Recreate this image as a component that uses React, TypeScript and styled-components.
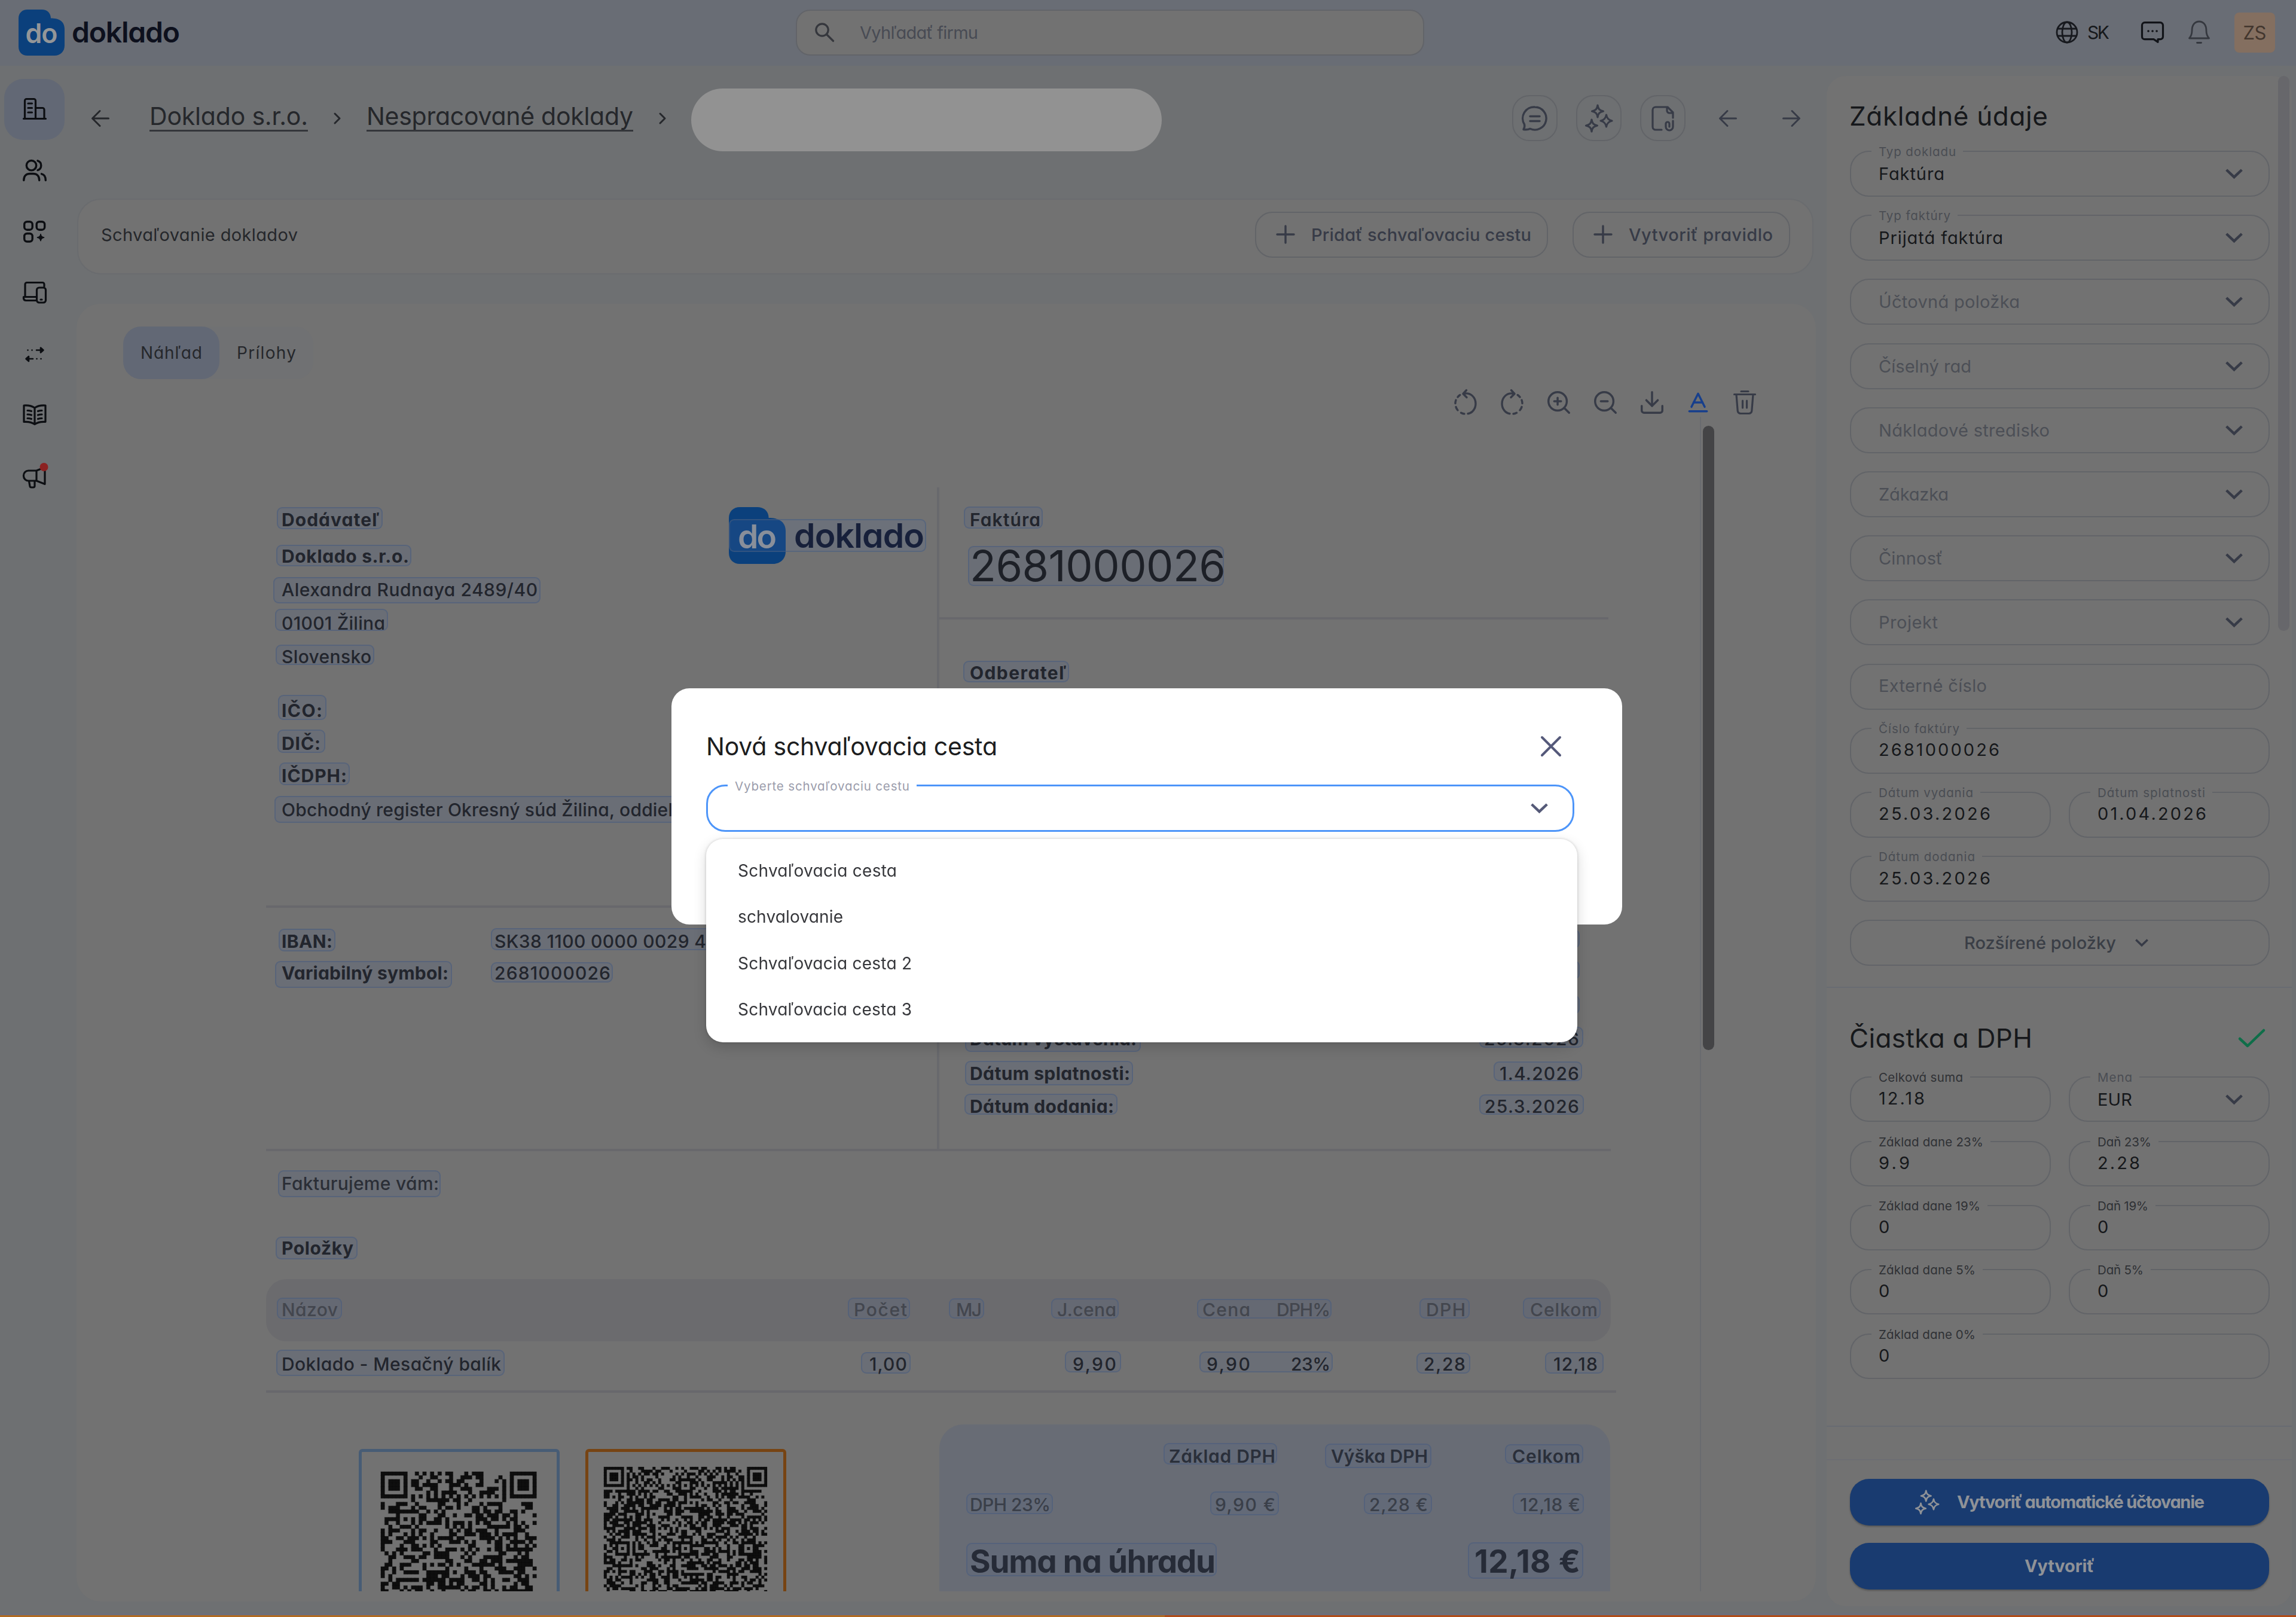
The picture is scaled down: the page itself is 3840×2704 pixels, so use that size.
import React, { useLayoutEffect, useMemo, useRef, useState } from "react";
import styled, { createGlobalStyle } from "styled-components";
import { Baseline, Download, ZoomIn, ZoomOut } from "lucide-react";

const c = {
  page: "#6e7072",
  card: "#727272",
  top: "#696d75",
  active: "#626875",
  line: "#626468",
  soft: "#6a6c6f",
  ink: "#16181b",
  text: "#25272b",
  slate: "#373b47",
  muted: "#4c4f56",
  blue: "#193b70",
};

const Global = createGlobalStyle`
  *, *::before, *::after { box-sizing: border-box; }
  html, body { margin: 0; padding: 0; background: ${c.page}; }
  body {
    font-family: Inter, "Noto Sans", sans-serif;
    font-feature-settings: "cv11";
    color: ${c.text};
    width: 3840px;
    height: 2704px;
    overflow: hidden;
  }
  button { font: inherit; color: inherit; background: none; border: 0; padding: 0; }
`;

/* ---------- text that is tracked out to a given measure ---------- */

const FitSpan = styled.span`
  display: inline-block;
  white-space: pre;
`;

function Fit({ w, children }: { w: number; children: string }) {
  const ref = useRef<HTMLSpanElement>(null);
  const [ls, setLs] = useState(0);
  useLayoutEffect(() => {
    const el = ref.current;
    if (!el) return;
    el.style.letterSpacing = "0px";
    el.style.marginRight = "0px";
    const natural = el.getBoundingClientRect().width;
    const next = (w - natural) / Math.max(1, children.length - 1);
    el.style.letterSpacing = `${next}px`;
    el.style.marginRight = `${-next}px`;
    setLs(next);
  }, [w, children]);
  return (
    <FitSpan ref={ref} style={{ letterSpacing: ls, marginRight: -ls }}>
      {children}
    </FitSpan>
  );
}

/* ---------- icons ---------- */

const Svg = styled.svg<{ $color?: string; $sw?: number }>`
  display: block;
  flex: none;
  overflow: visible;
  fill: none;
  stroke: ${(p) => p.$color ?? "currentColor"};
  stroke-width: ${(p) => p.$sw ?? 3.6};
  stroke-linecap: round;
  stroke-linejoin: round;
`;

type IconProps = { color?: string; sw?: number; size?: number };

const BuildingIcon = () => (
  <Svg width="40" height="36" viewBox="0 0 40 36" $sw={3.2}>
    <path d="M1.5 34.5h37M3.5 34V4.5a3 3 0 0 1 3-3h12a3 3 0 0 1 3 3V34M21.5 16.5H33a3 3 0 0 1 3 3V34M9 9h6.5M9 16.5h6.5M9 24h6.5" />
  </Svg>
);
const UsersIcon = () => (
  <Svg width="40" height="36" viewBox="0 0 40 36" $sw={3.4}>
    <circle cx="14.5" cy="9.7" r="8.2" />
    <path d="M25 1.8a8.3 8.3 0 0 1 0 15.8M1.8 34.5C1.8 27 6 23.5 12 23.5h5.5c6 0 10.200 3.500 10.200 11M31.500 23.800c4 .8 6.800 4 6.800 10.700" />
  </Svg>
);
const GridIcon = () => (
  <Svg width="38" height="36" viewBox="0 0 38 36" $sw={3.4}>
    <rect x="1.700" y="1.700" width="13.500" height="13.500" rx="4.500" />
    <rect x="22.200" y="1.700" width="13.500" height="13.500" rx="4.500" />
    <rect x="1.700" y="21.500" width="13.500" height="13.500" rx="4.500" />
    <path d="M29 22.500c.5 3.500 2 5 5.500 5.600-3.500.6-5 2.100-5.500 5.600-.5-3.500-2-5-5.500-5.600 3.500-.6 5-2.100 5.500-5.600z" fill="currentColor" strokeWidth="1.600" />
  </Svg>
);
const DevicesIcon = () => (
  <Svg width="40" height="36" viewBox="0 0 40 36" $sw={3.2}>
    <path d="M4 25V4.500a3 3 0 0 1 3-3h26a3 3 0 0 1 3 3V8M22 31.500H5.500a4 4 0 0 1-4-3.500v-2.500H22" />
    <rect x="23.500" y="10" width="15" height="25" rx="4" />
    <path d="M30 30h2" />
  </Svg>
);
const TransferIcon = () => (
  <Svg width="34" height="30" viewBox="0 0 34 30" $sw={2.6}>
    <path d="M20 8.500h8M27 4.500l4.500 4-4.500 4zM14 23H6M7 19L2.500 23l4.500 4z" fill="currentColor" />
    <path d="M5.500 8.500h.1M12.500 8.500h.1M20.500 23h.1M27.500 23h.1" />
  </Svg>
);
const BookIcon = () => (
  <Svg width="40" height="36" viewBox="0 0 40 36" $sw={3.2}>
    <path d="M20 6C15 2.500 9 1.500 2 2v27.500c7-.5 13 .5 18 4 5-3.500 11-4.500 18-4V2C31 1.500 25 2.500 20 6zM20 6v27.500" />
    <path d="M8 10.500c2.500 0 4.500.3 6.500 1M8 17c2.500 0 4.500.3 6.500 1M8 23.500c2.500 0 4.500.3 6.500 1M32 10.500c-2.500 0-4.500.3-6.500 1M32 17c-2.500 0-4.500.3-6.500 1M32 23.500c-2.500 0-4.500.3-6.500 1" />
  </Svg>
);
const HornIcon = () => (
  <Svg width="40" height="38" viewBox="0 0 40 38" $sw={3.2}>
    <path d="M23 9v17M23 9H9.500a8 8 0 0 0-8 8v1a8 8 0 0 0 8 8H23l14 5.500V3.500zM10.500 26.500l1.500 8.500a2.500 2.500 0 0 0 2.500 2h3a2.500 2.500 0 0 0 2.500-2.500V26.500" />
    <circle cx="35.500" cy="3" r="7" fill="#8c2222" stroke="none" />
  </Svg>
);
const SearchIcon = () => (
  <Svg width="32" height="32" viewBox="0 0 32 32" $color="#35373d" $sw={3.2}>
    <circle cx="12" cy="12" r="10.200" />
    <path d="M19.500 19.500L30.500 30.500" />
  </Svg>
);
const GlobeIcon = () => (
  <Svg width="38" height="38" viewBox="0 0 38 38" $color="#17191e" $sw={2.800}>
    <circle cx="19" cy="19" r="17" />
    <ellipse cx="19" cy="19" rx="8" ry="17" />
    <path d="M3.500 13h31M3.500 25h31" />
  </Svg>
);
const ChatIcon = () => (
  <Svg width="38" height="36" viewBox="0 0 38 36" $color="#111318" $sw={3.200}>
    <path d="M6 1.700h26a4.500 4.500 0 0 1 4.500 4.500v19a4.500 4.500 0 0 1-4.500 4.500h-4v4.600l-7-4.600H6a4.500 4.500 0 0 1-4.500-4.500v-19A4.500 4.500 0 0 1 6 1.700z" />
    <path d="M12 16h.1M19 16h.1M26 16h.1" strokeWidth="3.600" />
  </Svg>
);
const BellIcon = () => (
  <Svg width="38" height="40" viewBox="0 0 38 40" $color="#35383f" $sw={2.800}>
    <path d="M2.500 30h33c-3-3.500-4.500-7-4.500-12.500C31 8 26.500 2 19 2S7 8 7 17.500C7 23 5.500 26.500 2.500 30zM15.500 37.500h7" />
  </Svg>
);
const ArrowIcon = ({ right, color, size = 30 }: IconProps & { right?: boolean }) => (
  <Svg width={size} height="28" viewBox="0 0 30 28" $color={color} $sw={3}>
    {right ? <path d="M1.500 14h27M16 1.500L28.500 14 16 26.500" /> : <path d="M28.500 14h-27M14 1.500L1.500 14 14 26.500" />}
  </Svg>
);
const CrumbChevron = () => (
  <Svg width="14" height="18" viewBox="0 0 14 18" $sw={3}>
    <path d="M3 1l8 8-8 8" />
  </Svg>
);
const Chevron = styled(Svg)`
  stroke-linecap: butt;
  stroke-linejoin: miter;
`;
const DownIcon = ({ size = 29, color = c.slate, sw = 4.4 }: IconProps) => (
  <Chevron width={size} height={(size * 17) / 29} viewBox="0 0 29 17" $color={color} $sw={sw}>
    <path d="M1.700 2l12.800 12.200L27.300 2" />
  </Chevron>
);
const PlusIcon = () => (
  <Svg width="30" height="30" viewBox="0 0 30 30" $sw={3.400}>
    <path d="M15 1v28M1 15h28" />
  </Svg>
);
const CommentIcon = () => (
  <Svg width="42" height="42" viewBox="0 0 42 42" $color={c.slate} $sw={3.400}>
    <path d="M21 2a19 19 0 1 1-8 36.200c-3 1.800-7 1.800-11 1.300 2-3 2.200-5.500 1.500-8.500A19 19 0 0 1 21 2z" />
    <path d="M13 17.500h16M13 25.500h16" />
  </Svg>
);
const SparkIcon = ({ size = 48, color = c.slate, sw = 3.200 }: IconProps) => (
  <Svg width={size} height={size} viewBox="0 0 48 48" $color={color} $sw={sw}>
    <path d="M22 2c1 6.500 3 8.500 9.500 10-6.500 1.500-8.500 3.500-9.500 10-1-6.500-3-8.500-9.500-10C19 10.500 21 8.500 22 2z" />
    <path d="M36.500 18c1 6 3.500 8.500 9.500 10-6 1.500-8.500 4-9.500 10-1-6-3.500-8.500-9.500-10 6-1.500 8.500-4 9.500-10z" />
    <path d="M12 26c1 6.500 3 8.500 9.500 10-6.500 1.500-8.500 3.500-9.500 10-1-6.500-3-8.500-9.500-10C9 34.500 11 32.500 12 26z" />
  </Svg>
);
const FileClipIcon = () => (
  <Svg width="38" height="42" viewBox="0 0 38 42" $color={c.slate} $sw={3.200}>
    <path d="M17 40H7a5 5 0 0 1-5-5V7a5 5 0 0 1 5-5h20l9 9v9M26 2v6a4 4 0 0 0 4 4h6" />
    <path d="M36 25v10a6 6 0 0 1-12 0v-5M24 30a3 3 0 0 1 6 0v5" />
  </Svg>
);
const RotateIcon = ({ cw }: { cw?: boolean }) => (
  <Svg width="40" height="44" viewBox="0 0 40 44" $color={c.slate} $sw={3.400}>
    <g transform={cw ? "matrix(-1 0 0 1 40 0)" : undefined}>
      <path d="M17 7.500C29 4.500 37 14 37 24c0 8.500-5.500 15.500-13 16.800M21.500 1.500L16 7.500l6 6" />
      <path d="M18 41c-2 0-4-.8-5.500-1.700M7 35c-1.500-1.800-2.500-3.500-3-5.500M3 23.500c0-2 .4-3.800 1-5.500M7 13c1-1.400 2.400-2.600 3.800-3.500" />
    </g>
  </Svg>
);
const TrashIcon = () => (
  <Svg width="38" height="40" viewBox="0 0 38 40" $color={c.slate} $sw={3.200}>
    <path d="M1.500 6.500h35M13 1.500h12M5 7l2.200 27a5 5 0 0 0 5 4.500h13.600a5 5 0 0 0 5-4.500L33 7M15.500 17v12M22.500 17v12" />
  </Svg>
);
const CheckIcon = () => (
  <Svg width="44" height="32" viewBox="0 0 44 32" $color="#0f6e49" $sw={4.500}>
    <path d="M2 17l13 12L42 3" />
  </Svg>
);
const CloseIcon = () => (
  <Svg width="34" height="34" viewBox="0 0 34 34" $color="#55597a" $sw={4}>
    <path d="M2 2l30 30M32 2L2 32" />
  </Svg>
);

/* ---------- brand ---------- */

const LogoRow = styled.div<{ $gap: number }>`
  display: flex;
  align-items: center;
  gap: ${(p) => p.$gap}px;
`;
const Mark = styled.div<{ $s: number }>`
  position: relative;
  flex: none;
  width: ${(p) => p.$s}px;
  height: ${(p) => p.$s}px;
  display: flex;
  align-items: center;
  justify-content: center;
  padding-top: ${(p) => p.$s * 0.05}px;
  color: #949698;
  font-weight: 600;
  font-size: ${(p) => p.$s * 0.58}px;
  line-height: 1;
  & > svg { position: absolute; inset: 0; }
  & > span { position: relative; }
`;
const Word = styled.div<{ $size: number; $color: string }>`
  font-size: ${(p) => p.$size}px;
  font-weight: 600;
  line-height: 1;
  color: ${(p) => p.$color};
`;

function Logo({ s, markW, wordW, gap, word, color }: { s: number; markW: number; wordW: number; gap: number; word: number; color: string }) {
  return (
    <LogoRow $gap={gap}>
      <Mark $s={s}>
        <svg viewBox="0 0 77 77" width={s} height={s}>
          <path d="M15 0h24c9 0 15 6 15 14.500 12 0 23 4 23 18V60c0 10-7 17-17 17H15C6 77 0 71 0 62V15C0 6 6 0 15 0z" fill="#0b407c" />
        </svg>
        <Fit w={markW}>do</Fit>
      </Mark>
      <Word $size={word} $color={color}>
        <Fit w={wordW}>doklado</Fit>
      </Word>
    </LogoRow>
  );
}

/* ---------- shell ---------- */

const Shell = styled.div`
  width: 3840px;
  height: 2704px;
  display: flex;
  flex-direction: column;
  background: ${c.page};
`;
const TopBar = styled.header`
  height: 110px;
  flex: none;
  display: flex;
  align-items: center;
  background: ${c.top};
  padding: 0 35px 2px 31px;
`;
const Search = styled.div`
  width: 1051px;
  height: 77px;
  margin-left: 1030px;
  display: flex;
  align-items: center;
  gap: 43px;
  padding-left: 30px;
  border: 2px solid #626469;
  border-radius: 24px;
  background: ${c.card};
  color: #484b54;
  font-size: 29px;
`;
const TopActions = styled.div`
  margin-left: auto;
  display: flex;
  align-items: center;
`;
const Lang = styled.div`
  margin: 0 53px 0 15px;
  font-size: 30px;
  color: ${c.ink};
`;
const Avatar = styled.div`
  width: 68px;
  height: 67px;
  margin-left: 40px;
  border-radius: 8px;
  background: #846f60;
  color: #42362e;
  font-size: 31px;
  display: flex;
  align-items: center;
  justify-content: center;
`;
const BellWrap = styled.div`
  margin-left: 40px;
`;
const Main = styled.div`
  flex: 1;
  min-height: 0;
  display: flex;
`;
const Sidebar = styled.nav`
  width: 128px;
  flex: none;
  padding: 22px 0 0 7px;
  color: #0c0e12;
`;
const NavItem = styled.div<{ $on?: boolean }>`
  width: 101px;
  height: 102.400px;
  display: flex;
  align-items: center;
  justify-content: center;
  padding-bottom: 2px;
  border-radius: 32px;
  background: ${(p) => (p.$on ? c.active : "transparent")};
`;
const Content = styled.main`
  width: 2927px;
  flex: none;
  display: flex;
  flex-direction: column;
`;
const BottomStrip = styled.div`
  height: 6px;
  flex: none;
  border-top: 3px solid #6b6e7c;
  background: linear-gradient(90deg, #b06a20 0 1948px, #b04c16 1948px);
`;

/* ---------- breadcrumb ---------- */

const CrumbRow = styled.div`
  height: 105px;
  margin-top: 35px;
  padding: 0 44px 0 25px;
  display: flex;
  align-items: center;
  flex: none;
  color: ${c.text};
`;
const Crumb = styled.a<{ $ml: number; $mr: number }>`
  margin: -2px ${(p) => p.$mr}px 0 ${(p) => p.$ml}px;
  font-size: 41px;
  line-height: 40px;
  border-bottom: 3px solid #34363a;
  height: 46px;
`;
const Redacted = styled.div`
  width: 787px;
  height: 105px;
  margin: 6px 0 0 41px;
  border-radius: 53px;
  background: #929292;
`;
const Tools = styled.div`
  margin-left: auto;
  display: flex;
  align-items: center;
  gap: 31px;
  color: ${c.slate};
`;
const RoundButton = styled.button`
  width: 76px;
  height: 77px;
  border: 2px solid ${c.line};
  border-radius: 29px;
  display: flex;
  align-items: center;
  justify-content: center;
`;
const Pager = styled.div`
  display: flex;
  gap: 76px;
  margin-left: 25px;
`;

/* ---------- approval card ---------- */

const ApprovalCard = styled.section`
  height: 127px;
  width: 2904px;
  flex: none;
  margin: 82px 0 0 1px;
  padding: 0 37px 7px 38px;
  display: flex;
  align-items: center;
  background: ${c.card};
  border: 2px solid ${c.soft};
  border-radius: 40px;
  font-size: 29px;
`;
const OutlineButton = styled.button<{ $w: number }>`
  width: ${(p) => p.$w}px;
  height: 77px;
  display: flex;
  align-items: center;
  gap: 28px;
  padding-left: 34px;
  border: 2px solid ${c.line};
  border-radius: 29px;
  color: ${c.slate};
  font-weight: 500;
  font-size: 29px;
`;
const Actions = styled.div`
  margin-left: auto;
  display: flex;
  gap: 41px;
`;

/* ---------- preview ---------- */

const Preview = styled.section`
  width: 2909px;
  height: 2170px;
  margin-top: 49px;
  flex: none;
  background: ${c.card};
  border-radius: 40px;
  overflow: hidden;
  display: flex;
  flex-direction: column;
`;
const Tabs = styled.div`
  display: flex;
  width: 318px;
  height: 88px;
  flex: none;
  margin: 38px 0 0 78px;
  background: #707173;
  border-radius: 30px;
  font-size: 28px;
`;
const Tab = styled.div<{ $on?: boolean; $w: number }>`
  width: ${(p) => p.$w}px;
  display: flex;
  align-items: center;
  justify-content: center;
  border-radius: 30px;
  background: ${(p) => (p.$on ? c.active : "transparent")};
`;
const DocTools = styled.div`
  height: 48px;
  flex: none;
  margin: 15px 80px 0 0;
  display: flex;
  justify-content: flex-end;
  align-items: center;
  color: ${c.slate};
`;
const DocTool = styled.div<{ $color?: string }>`
  width: 77.800px;
  display: flex;
  justify-content: center;
  color: ${(p) => p.$color ?? "inherit"};
  svg { flex: none; }
`;
const Viewer = styled.div`
  height: 1964px;
  flex: none;
  display: flex;
  overflow: hidden;
`;
const Sheet = styled.div`
  width: 2717px;
  flex: none;
  border-right: 2px solid #696b6f;
  padding: 118px 0 0 317px;
`;
const DocThumb = styled.div`
  width: 19px;
  height: 1044px;
  margin: 15px 0 0 3px;
  border-radius: 10px;
  background: #444446;
`;

/* ---------- invoice ---------- */

const Rule = styled.div<{ $w: number; $mt?: number }>`
  width: ${(p) => p.$w}px;
  height: 4px;
  flex: none;
  margin-top: ${(p) => p.$mt ?? 0}px;
  background: #68686c;
`;
const Parties = styled.div`
  width: 2249px;
  height: 1106px;
  display: flex;
`;
const Supplier = styled.div`
  width: 1122px;
  height: 1106px;
  display: flex;
  flex-direction: column;
`;
const SupplierTop = styled.div`
  height: 699px;
  padding: 33px 0 0 26px;
  display: flex;
  justify-content: space-between;
  overflow: hidden;
`;
const Stack = styled.div<{ $w?: number }>`
  display: flex;
  flex-direction: column;
  align-items: flex-start;
  width: ${(p) => (p.$w ? `${p.$w}px` : "auto")};
`;
const Invoice = styled.div`
  width: 1123px;
  border-left: 4px solid #68696d;
  display: flex;
  flex-direction: column;
`;
const Pad = styled.div<{ $t: number; $l?: number }>`
  padding: ${(p) => p.$t}px 51px 0 ${(p) => p.$l ?? 51}px;
`;
const Pair = styled.div<{ $mt: number; $start?: boolean }>`
  display: flex;
  justify-content: ${(p) => (p.$start ? "flex-start" : "space-between")};
  align-items: center;
  height: 40px;
  margin-top: ${(p) => p.$mt}px;
`;
const Ocr = styled.div<{ $b: number[]; $mt: number; $size: number; $h: number; $weight: number; $color: string }>`
  position: relative;
  flex: none;
  margin-top: ${(p) => p.$mt}px;
  margin-right: -2px;
  height: ${(p) => p.$h}px;
  line-height: ${(p) => p.$h}px;
  font-size: ${(p) => p.$size}px;
  font-weight: ${(p) => p.$weight};
  color: ${(p) => p.$color};
  white-space: nowrap;
  &::before {
    content: "";
    position: absolute;
    left: ${(p) => -p.$b[0]}px;
    right: ${(p) => -p.$b[2] - 1}px;
    top: ${(p) => p.$h / 2 - p.$b[1]}px;
    bottom: ${(p) => p.$h / 2 - p.$b[3] - 1}px;
    border: 2px solid rgba(72, 92, 126, 0.55);
    border-radius: 9px;
    background: rgba(90, 102, 126, 0.32);
    display: ${(p) => (p.$b.length ? "block" : "none")};
  }
  & > span { position: relative; }
`;
const Cell = styled.div<{ $w: number }>`
  width: ${(p) => p.$w}px;
  flex: none;
  display: flex;
`;
const LogoBox = styled.div`
  position: relative;
  height: 95px;
  width: 330px;
  margin-right: 18px;
  &::after {
    content: "";
    position: absolute;
    left: 0;
    top: 20px;
    width: 330px;
    height: 55px;
    border: 2px solid rgba(72, 92, 126, 0.55);
    border-radius: 9px;
    background: rgba(80, 110, 165, 0.16);
  }
`;
const HiddenHit = styled.div<{ $mt: number }>`
  width: 150px;
  height: 32px;
  margin: ${(p) => p.$mt}px -3px 0 auto;
  border: 2px solid rgba(72, 92, 126, 0.55);
  border-radius: 9px;
  background: rgba(90, 102, 126, 0.32);
`;
const TableRow = styled.div<{ $head?: boolean }>`
  width: 2249px;
  height: ${(p) => (p.$head ? 104 : 82)}px;
  margin-top: ${(p) => (p.$head ? 32 : 0)}px;
  padding: 0 0 ${(p) => (p.$head ? 2 : 6)}px 26px;
  border-radius: 34px;
  background: ${(p) => (p.$head ? "#6b6b6e" : "transparent")};
  display: grid;
  grid-template-columns: 500px 544px 125px 225px 224px 134px 226px 221px;
  align-items: center;
  justify-items: end;
  & > :first-child { justify-self: start; }
`;
const Bottom = styled.div`
  display: flex;
  align-items: flex-start;
`;
const QrFrame = styled.div<{ $color: string; $pad: string; $ml: number }>`
  width: 336px;
  height: 400px;
  flex: none;
  margin: 94px 0 0 ${(p) => p.$ml}px;
  border: 5px solid ${(p) => p.$color};
  border-radius: 6px;
  padding: ${(p) => p.$pad};
`;
const Summary = styled.div`
  width: 1122px;
  height: 420px;
  margin: 53px 0 0 256px;
  padding: 33px 51px 0;
  background: #686c75;
  border-radius: 40px;
`;
const SumRow = styled.div<{ $mt: number; $h: number }>`
  height: ${(p) => p.$h}px;
  margin-top: ${(p) => p.$mt}px;
  display: grid;
  grid-template-columns: 200px 309px 255px 255px;
  align-items: center;
  justify-items: end;
  & > :first-child { justify-self: start; }
`;

type TProps = { w: number; children: string; b?: number[]; mt?: number; size?: number; h?: number; weight?: number; color?: string };
function T({ w, children, b = [9, 20, 4, 16], mt = 0, size = 30, h = 40, weight = 500, color = "#22252d" }: TProps) {
  return (
    <Ocr $b={b} $mt={mt} $size={size} $h={h} $weight={weight} $color={color}>
      <Fit w={w + 3}>{children}</Fit>
    </Ocr>
  );
}

/* QR symbol: finder and alignment patterns plus a seeded data field */
function Qr({ n, px, seed, align }: { n: number; px: number; seed: number; align: number[] }) {
  const d = useMemo(() => {
    let s = seed;
    const rnd = () => {
      s = (s * 1664525 + 1013904223) % 4294967296;
      return s / 4294967296;
    };
    const ring = (x: number, y: number, cx: number, cy: number, r: number) => {
      const k = Math.max(Math.abs(x - cx), Math.abs(y - cy));
      if (k > r) return null;
      return r === 4 ? k === 3 || k <= 1 : k !== 1;
    };
    let out = "";
    for (let y = 0; y < n; y++)
      for (let x = 0; x < n; x++) {
        let on: boolean | null = ring(x, y, 3, 3, 4) ?? ring(x, y, n - 4, 3, 4) ?? ring(x, y, 3, n - 4, 4);
        const r = rnd();
        if (on === null)
          for (const ax of align)
            for (const ay of align) if (on === null) on = ring(x, y, ax, ay, 2);
        if (on === null) on = x === 6 || y === 6 ? (x + y) % 2 === 0 : r < 0.5;
        if (on) out += `M${x} ${y}h1v1h-1z`;
      }
    return out;
  }, [n, seed, align]);
  return (
    <Svg width={n * px} height={n * px} viewBox={`0 0 ${n} ${n}`} $color="#0e0e0e" $sw={0.04}>
      <path d={d} fill="#0e0e0e" />
    </Svg>
  );
}
const ALIGN_S = [34];
const ALIGN_L = [6, 28, 50];

const headColor = "#43464e";
const dim = "#3a3f49";

function InvoiceDoc() {
  return (
    <Sheet>
      <Parties>
        <Supplier>
          <SupplierTop>
            <Stack $w={700}>
              <T w={160} weight={700} b={[8, 21, 5, 15]} mt={1}>Dodávateľ</T>
              <T w={210} weight={700} mt={21} b={[9, 19, 3, 16]}>Doklado s.r.o.</T>
              <T w={425} mt={16} b={[14, 21, 4, 22]}>Alexandra Rudnaya 2489/40</T>
              <T w={170} mt={16} b={[11, 24, 4, 12]}>01001 Žilina</T>
              <T w={147} mt={16} b={[10, 20, 4, 13]}>Slovensko</T>
              <T w={65} weight={700} mt={50} b={[6, 26, 6, 15]}>IČO:</T>
              <T w={62} weight={700} mt={15} b={[7, 23, 7, 15]}>DIČ:</T>
              <T w={106} weight={700} mt={14} b={[4, 22, 4, 15]}>IČDPH:</T>
              <T w={651} mt={17} b={[12, 23, 90, 21]}>Obchodný register Okresný súd Žilina, oddiel</T>
            </Stack>
            <LogoBox>
              <Logo s={95} markW={65} wordW={218} gap={14} word={57} color="#0c1126" />
            </LogoBox>
          </SupplierTop>
          <Rule $w={1122} />
          <Pad $t={36} $l={26}>
            <Pair $mt={0} $start>
              <Cell $w={356}><T w={82} weight={700} b={[5, 21, 4, 16]}>IBAN:</T></Cell>
              <T w={351} b={[6, 22, 80, 14]}>SK38 1100 0000 0029 4</T>
            </Pair>
            <Pair $mt={13} $start>
              <Cell $w={356}><T w={276} weight={700} b={[11, 20, 5, 24]}>Variabilný symbol:</T></Cell>
              <T w={191} b={[6, 18, 3, 15]}>2681000026</T>
            </Pair>
          </Pad>
        </Supplier>
        <Invoice>
          <Pad $t={34}>
            <Stack>
              <T w={115} weight={600} b={[10, 22, 3, 14]}>Faktúra</T>
              <T w={425} mt={21} size={72} h={72} weight={400} color="#1d2027" b={[3, 33, -4, 33]}>2681000026</T>
            </Stack>
          </Pad>
          <Rule $w={1119} $mt={50} />
          <Pad $t={69}>
            <Stack>
              <T w={158} weight={700} b={[11, 20, 4, 15]}>Odberateľ</T>
            </Stack>
            <HiddenHit $mt={409} />
            <HiddenHit $mt={20} />
            <HiddenHit $mt={26} />
            <Pair $mt={21}>
              <T w={276} weight={700} b={[8, 21, 6, 21]}>Dátum vystavenia:</T>
              <T w={156} b={[8, 20, 6, 14]}>25.3.2026</T>
            </Pair>
            <Pair $mt={18}>
              <T w={265} weight={700} b={[8, 21, 4, 19]}>Dátum splatnosti:</T>
              <T w={130} b={[10, 20, 4, 12]}>1.4.2026</T>
            </Pair>
            <Pair $mt={15}>
              <T w={238} weight={700} b={[9, 21, 5, 13]}>Dátum dodania:</T>
              <T w={155} b={[9, 20, 7, 13]}>25.3.2026</T>
            </Pair>
          </Pad>
        </Invoice>
      </Parties>
      <Rule $w={2249} />
      <Pad $t={34} $l={26}>
        <Stack>
          <T w={260} b={[6, 22, 2, 22]} color="#2b2e36">Fakturujeme vám:</T>
          <T w={117} mt={68} weight={700} b={[10, 19, 6, 18]}>Položky</T>
        </Stack>
      </Pad>
      <TableRow $head>
        <T w={91} color={headColor} b={[8, 20, 6, 15]}>Názov</T>
        <T w={86} color={headColor} b={[10, 20, 4, 15]}>Počet</T>
        <T w={40} color={headColor} b={[12, 19, 3, 14]}>MJ</T>
        <T w={96} color={headColor} b={[10, 19, 3, 14]}>J.cena</T>
        <T w={77} color={headColor} b={[9, 18, 135, 14]}>Cena</T>
        <T w={87} color={headColor} b={[]}>DPH%</T>
        <T w={63} color={headColor} b={[11, 19, 6, 14]}>DPH</T>
        <T w={110} color={headColor} b={[12, 20, 4, 14]}>Celkom</T>
      </TableRow>
      <TableRow>
        <T w={364} b={[9, 24, 5, 19]}>Doklado - Mesačný balík</T>
        <T w={60} b={[14, 20, 5, 15]}>1,00</T>
        <span />
        <T w={70} b={[13, 22, 7, 13]}>9,90</T>
        <T w={70} b={[12, 21, 137, 13]}>9,90</T>
        <T w={63} b={[]}>23%</T>
        <T w={67} b={[12, 19, 7, 15]}>2,28</T>
        <T w={71} b={[14, 20, 9, 15]}>12,18</T>
      </TableRow>
      <Rule $w={2258} />
      <Bottom>
        <QrFrame $color="#475c75" $pad="33px 0 0 32px" $ml={155}>
          <Qr n={41} px={6.350} seed={77} align={ALIGN_S} />
        </QrFrame>
        <QrFrame $color="#774413" $pad="25px 0 0 26px" $ml={43}>
          <Qr n={57} px={4.790} seed={1234} align={ALIGN_L} />
        </QrFrame>
        <Summary>
          <SumRow $mt={0} $h={40}>
            <span />
            <T w={175} weight={600} color="#2a2f3a" b={[9, 22, 2, 13]}>Základ DPH</T>
            <T w={159} weight={600} color="#2a2f3a" b={[10, 21, 5, 19]}>Výška DPH</T>
            <T w={111} weight={600} color="#2a2f3a" b={[12, 20, 4, 12]}>Celkom</T>
          </SumRow>
          <SumRow $mt={41} $h={40}>
            <T w={132} color={dim} b={[6, 19, 3, 15]}>DPH 23%</T>
            <T w={98} color={dim} b={[8, 22, 5, 17]}>9,90 €</T>
            <T w={95} color={dim} b={[9, 19, 6, 15]}>2,28 €</T>
            <T w={98} color={dim} b={[12, 19, 5, 15]}>12,18 €</T>
          </SumRow>
          <SumRow $mt={45} $h={60}>
            <T w={408} size={53} h={60} weight={700} color="#262b37" b={[6, 31, 1, 24]}>Suma na úhradu</T>
            <span />
            <span />
            <T w={174} size={53} h={60} weight={700} color="#262b37" b={[11, 32, 4, 28]}>12,18 €</T>
          </SumRow>
        </Summary>
      </Bottom>
    </Sheet>
  );
}

/* ---------- right panel ---------- */

const Panel = styled.aside`
  position: relative;
  width: 778px;
  height: 2559px;
  margin-top: 17px;
  padding-top: 37px;
  background: ${c.card};
  border-radius: 32px;
  display: flex;
  flex-direction: column;
`;
const PanelThumb = styled.div`
  position: absolute;
  right: 4px;
  top: 0;
  width: 19px;
  height: 928px;
  border-radius: 10px;
  background: #67676b;
`;
const PanelHead = styled.div<{ $mt?: number }>`
  height: 60px;
  margin: ${(p) => p.$mt ?? 0}px 45px 0 38px;
  display: flex;
  align-items: center;
  justify-content: space-between;
  font-size: 44px;
  color: ${c.ink};
`;
const FieldGrid = styled.div<{ $mt: number; $gap: number }>`
  display: grid;
  grid-template-columns: 336px 336px;
  column-gap: 30px;
  row-gap: ${(p) => p.$gap}px;
  margin: ${(p) => p.$mt}px 37px 0 39px;
`;
const FieldBox = styled.div<{ $half?: boolean; $h: number; $color: string; $up: number }>`
  position: relative;
  grid-column: ${(p) => (p.$half ? "auto" : "1 / -1")};
  height: ${(p) => p.$h}px;
  border: 2px solid ${c.line};
  border-radius: 32px;
  padding: 0 43px ${(p) => p.$up}px 46px;
  display: flex;
  align-items: center;
  justify-content: space-between;
  font-size: 29px;
  color: ${(p) => p.$color};
`;
const Label = styled.span<{ $color?: string; $bg?: string; $left?: number }>`
  position: absolute;
  left: ${(p) => p.$left ?? 34}px;
  top: -12px;
  padding: 0 12px;
  line-height: 24px;
  font-size: 20.500px;
  color: ${(p) => p.$color ?? "#4a4d53"};
  background: ${(p) => p.$bg ?? c.card};
`;
const MoreButton = styled.button`
  grid-column: 1 / -1;
  height: 77px;
  border: 2px solid ${c.line};
  border-radius: 32px;
  display: flex;
  align-items: center;
  justify-content: center;
  gap: 32px;
  padding-right: 12px;
  font-size: 29px;
  font-weight: 500;
  color: #3a3e46;
`;
const Divider = styled.div<{ $mt: number; $color?: string }>`
  height: 2px;
  flex: none;
  margin-top: ${(p) => p.$mt}px;
  background: ${(p) => p.$color ?? "#686b72"};
`;
const Primary = styled.button<{ $mt: number }>`
  height: 78px;
  flex: none;
  margin: ${(p) => p.$mt}px 38px 0 39px;
  border-radius: 32px;
  background: ${c.blue};
  box-shadow: 0 2px 3px rgba(0, 0, 0, 0.25);
  color: #8f9297;
  font-size: 29px;
  font-weight: 700;
  display: flex;
  align-items: center;
  justify-content: center;
  gap: 29px;
`;

type FieldDef = { label?: [string, number]; value: string; w: number; half?: boolean; select?: boolean; empty?: boolean; mute?: boolean };

const basics: FieldDef[] = [
  { label: ["Typ dokladu", 129], value: "Faktúra", w: 110, select: true },
  { label: ["Typ faktúry", 120], value: "Prijatá faktúra", w: 208, select: true },
  { value: "Účtovná položka", w: 236, select: true, empty: true },
  { value: "Číselný rad", w: 155, select: true, empty: true },
  { value: "Nákladové stredisko", w: 286, select: true, empty: true },
  { value: "Zákazka", w: 117, select: true, empty: true },
  { value: "Činnosť", w: 107, select: true, empty: true },
  { value: "Projekt", w: 99, select: true, empty: true },
  { value: "Externé číslo", w: 181, empty: true },
  { label: ["Číslo faktúry", 135], value: "2681000026", w: 202 },
  { label: ["Dátum vydania", 158], value: "25.03.2026", w: 187, half: true },
  { label: ["Dátum splatnosti", 180], value: "01.04.2026", w: 182, half: true },
  { label: ["Dátum dodania", 161], value: "25.03.2026", w: 187 },
];
const amounts: FieldDef[] = [
  { label: ["Celková suma", 141], value: "12.18", w: 77, half: true },
  { label: ["Mena", 58], value: "EUR", w: 58, half: true, select: true, mute: true },
  { label: ["Základ dane 23%", 175], value: "9.9", w: 52, half: true },
  { label: ["Daň 23%", 90], value: "2.28", w: 71, half: true },
  { label: ["Základ dane 19%", 170], value: "0", w: 18, half: true },
  { label: ["Daň 19%", 85], value: "0", w: 18, half: true },
  { label: ["Základ dane 5%", 162], value: "0", w: 18, half: true },
  { label: ["Daň 5%", 77], value: "0", w: 18, half: true },
  { label: ["Základ dane 0%", 162], value: "0", w: 18 },
];

function Field({ f, h, dark }: { f: FieldDef; h: number; dark?: boolean }) {
  return (
    <FieldBox $half={f.half} $h={h} $color={f.empty ? c.muted : c.ink} $up={f.select ? 0 : 3}>
      {f.label && (
        <Label $color={dark && !f.mute ? "#2f3135" : undefined}>
          <Fit w={f.label[1]}>{f.label[0]}</Fit>
        </Label>
      )}
      <Fit w={f.w}>{f.value}</Fit>
      {f.select && <DownIcon />}
    </FieldBox>
  );
}

/* ---------- modal ---------- */

const Overlay = styled.div`
  position: fixed;
  inset: 0;
  display: flex;
  justify-content: center;
  align-items: flex-start;
  padding: 1151px 4px 0 0;
`;
const Dialog = styled.div`
  width: 1590px;
  height: 395px;
  border-radius: 30px;
  background: #fff;
  padding: 70px 80px 0 58px;
`;
const DialogHead = styled.div`
  height: 54px;
  display: flex;
  align-items: center;
  justify-content: space-between;
  padding-right: 22px;
  font-size: 41px;
  color: #1c1d20;
`;
const Select = styled.div`
  position: relative;
  height: 79px;
  margin-top: 37px;
  border: 3px solid #4d95f9;
  border-radius: 32px;
  display: flex;
  align-items: center;
  justify-content: flex-end;
  padding-right: 41px;
`;
const Menu = styled.div`
  position: absolute;
  left: -3px;
  top: 88px;
  width: 1457px;
  height: 340px;
  padding: 14px 53px 0;
  border-radius: 28px;
  background: #fff;
  box-shadow: 0 0 5px rgba(0, 0, 0, 0.18), 0 8px 22px rgba(0, 0, 0, 0.16);
`;
const Option = styled.div`
  height: 77.500px;
  display: flex;
  align-items: center;
  font-size: 28px;
  color: #36373b;
`;

export default function App() {
  return (
    <Shell>
      <Global />
      <TopBar>
        <Logo s={77} markW={54} wordW={181} gap={12} word={48} color="#0d101d" />
        <Search>
          <SearchIcon />
          <Fit w={198}>Vyhľadať firmu</Fit>
        </Search>
        <TopActions>
          <GlobeIcon />
          <Lang><Fit w={37}>SK</Fit></Lang>
          <ChatIcon />
          <BellWrap><BellIcon /></BellWrap>
          <Avatar><Fit w={39}>ZS</Fit></Avatar>
        </TopActions>
      </TopBar>
      <Main>
        <Sidebar>
          <NavItem $on><BuildingIcon /></NavItem>
          <NavItem><UsersIcon /></NavItem>
          <NavItem><GridIcon /></NavItem>
          <NavItem><DevicesIcon /></NavItem>
          <NavItem><TransferIcon /></NavItem>
          <NavItem><BookIcon /></NavItem>
          <NavItem><HornIcon /></NavItem>
        </Sidebar>
        <Content>
          <CrumbRow>
            <ArrowIcon />
            <Crumb $ml={67} $mr={42}><Fit w={265}>Doklado s.r.o.</Fit></Crumb>
            <CrumbChevron />
            <Crumb $ml={42} $mr={42}><Fit w={446}>Nespracované doklady</Fit></Crumb>
            <CrumbChevron />
            <Redacted />
            <Tools>
              <RoundButton><CommentIcon /></RoundButton>
              <RoundButton><SparkIcon /></RoundButton>
              <RoundButton><FileClipIcon /></RoundButton>
              <Pager>
                <ArrowIcon />
                <ArrowIcon right />
              </Pager>
            </Tools>
          </CrumbRow>
          <ApprovalCard>
            <Fit w={329}>Schvaľovanie dokladov</Fit>
            <Actions>
              <OutlineButton $w={490}><PlusIcon /><Fit w={368}>Pridať schvaľovaciu cestu</Fit></OutlineButton>
              <OutlineButton $w={364}><PlusIcon /><Fit w={241}>Vytvoriť pravidlo</Fit></OutlineButton>
            </Actions>
          </ApprovalCard>
          <Preview>
            <Tabs>
              <Tab $on $w={161}><Fit w={103}>Náhľad</Fit></Tab>
              <Tab $w={157}><Fit w={99}>Prílohy</Fit></Tab>
            </Tabs>
            <DocTools>
              <DocTool><RotateIcon /></DocTool>
              <DocTool><RotateIcon cw /></DocTool>
              <DocTool><ZoomIn size={46} strokeWidth={1.800} /></DocTool>
              <DocTool><ZoomOut size={46} strokeWidth={1.800} /></DocTool>
              <DocTool><Download size={46} strokeWidth={1.800} /></DocTool>
              <DocTool $color="#173f8c"><Baseline size={44} strokeWidth={1.900} /></DocTool>
              <DocTool><TrashIcon /></DocTool>
            </DocTools>
            <Viewer>
              <InvoiceDoc />
              <DocThumb />
            </Viewer>
          </Preview>
        </Content>
        <Panel>
          <PanelThumb />
          <PanelHead><Fit w={332}>Základné údaje</Fit></PanelHead>
          <FieldGrid $mt={28} $gap={30.200}>
            {basics.map((f, i) => <Field key={i} f={f} h={77} />)}
            <MoreButton><Fit w={254}>Rozšírené položky</Fit><DownIcon size={22} sw={4.600} /></MoreButton>
          </FieldGrid>
          <Divider $mt={35} />
          <PanelHead $mt={54}><Fit w={306}>Čiastka a DPH</Fit><CheckIcon /></PanelHead>
          <FieldGrid $mt={34} $gap={31.400}>
            {amounts.map((f, i) => <Field key={i} f={f} h={76} dark />)}
          </FieldGrid>
          <Divider $mt={78} />
          <Divider $mt={54} $color="#6c6e73" />
          <Primary $mt={31}><SparkIcon size={42} color="#8f9297" sw={3} /><Fit w={414}>Vytvoriť automatické účtovanie</Fit></Primary>
          <Primary $mt={29}><Fit w={117}>Vytvoriť</Fit></Primary>
        </Panel>
      </Main>
      <BottomStrip />
      <Overlay>
        <Dialog>
          <DialogHead><Fit w={487}>Nová schvaľovacia cesta</Fit><CloseIcon /></DialogHead>
          <Select>
            <Label $left={33} $bg="#fff" $color="#9a9cab"><Fit w={292}>Vyberte schvaľovaciu cestu</Fit></Label>
            <DownIcon color="#555a78" />
            <Menu>
              <Option><Fit w={266}>Schvaľovacia cesta</Fit></Option>
              <Option><Fit w={176}>schvalovanie</Fit></Option>
              <Option><Fit w={291}>Schvaľovacia cesta 2</Fit></Option>
              <Option><Fit w={291}>Schvaľovacia cesta 3</Fit></Option>
            </Menu>
          </Select>
        </Dialog>
      </Overlay>
    </Shell>
  );
}
